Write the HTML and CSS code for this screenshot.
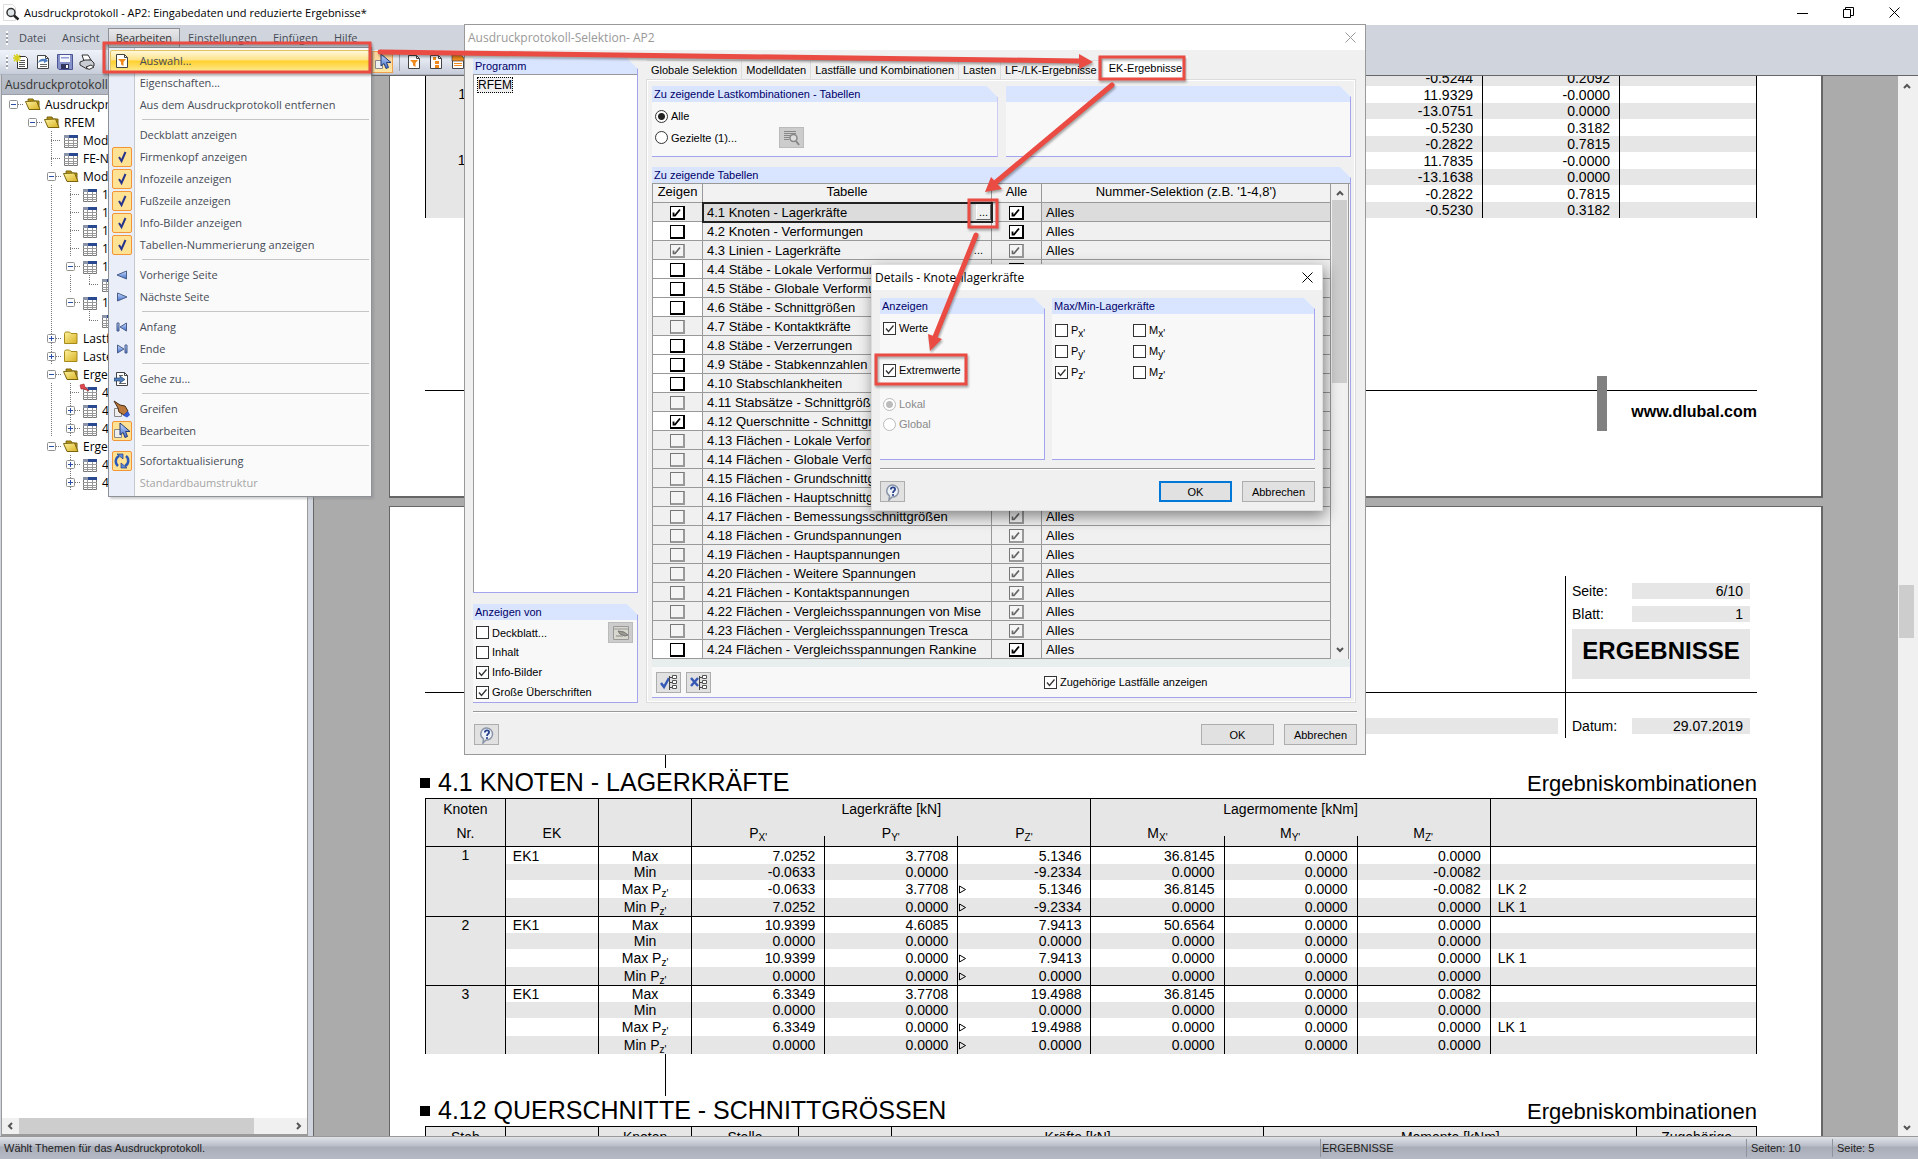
FILE: index.html
```html
<!DOCTYPE html>
<html lang="de">
<head>
<meta charset="utf-8">
<title>Ausdruckprotokoll - AP2</title>
<link rel="stylesheet" href="styles.css">
</head>
<body class="app">

<svg class="defs" aria-hidden="true">
  <defs>
    <linearGradient id="gold" x1="0" y1="0" x2="1" y2="1"><stop offset="0" stop-color="#fdf3a0"/><stop offset="1" stop-color="#d8b021"/></linearGradient>
    <linearGradient id="blue" x1="0" y1="0" x2="0" y2="1"><stop offset="0" stop-color="#c9dcff"/><stop offset="1" stop-color="#3f6cc8"/></linearGradient>
  </defs>
  <symbol id="t-v" viewBox="0 0 19 18"><path d="M9.500 0V18" class="dots"/></symbol>
  <symbol id="t-tee" viewBox="0 0 19 18"><path d="M9.500 0V18M9 9.500H21" class="dots"/></symbol>
  <symbol id="t-end" viewBox="0 0 19 18"><path d="M9.500 0V9M9 9.500H21" class="dots"/></symbol>
  <symbol id="t-minus" viewBox="0 0 19 18"><path d="M14 9.500H21" class="dots"/><rect x="5.500" y="5.500" width="8" height="8" rx="1" fill="#fff" stroke="#919191"/><path d="M7 9.500H12" stroke="#2b4fa8"/></symbol>
  <symbol id="t-plus" viewBox="0 0 19 18"><path d="M14 9.500H21M9.500 0V5M9.500 14V18" class="dots"/><rect x="5.500" y="5.500" width="8" height="8" rx="1" fill="#fff" stroke="#919191"/><path d="M7 9.500H12M9.500 7V12" stroke="#2b4fa8"/></symbol>
  <symbol id="f-open" viewBox="0 0 16 16"><path d="M3 3h5l1 2h5v7H4z" fill="#b8960f" stroke="#7a640e"/><path d="M.500 5.500 11.500 5 15 13.500H4z" fill="url(#gold)" stroke="#7a640e"/></symbol>
  <symbol id="f-shut" viewBox="0 0 16 16"><path d="M1.500 3.500 2.500 2h4l1.500 1.500h6v10h-12.500z" fill="url(#gold)" stroke="#a58a1c"/></symbol>
  <symbol id="sheet" viewBox="0 0 14 14"><path d="M.500 1.500h13v12H.500z" fill="#fff" stroke="#777"/><path d="M0 1h14v3H0z" fill="#8a93a8"/><path d="M5 1h9v3H5z" fill="#28488f"/><path d="M0 6.500h14M0 9.500h14M0 11.500h14M4.500 4v10M9.500 4v10" stroke="#999"/></symbol>
  <symbol id="page" viewBox="0 0 16 16"><path d="M2.500 1.500h8l3 3v10h-11z" fill="#fff" stroke="#444"/><path d="M10.500 1.500v3h3" fill="none" stroke="#444"/></symbol>
  <symbol id="funnel" viewBox="0 0 16 16"><use href="#page"/><path d="M4 6h8L9.500 9v4L7 11.500V9z" fill="#f08a1d"/></symbol>
  <symbol id="cursor" viewBox="0 0 18 18"><path d="M1.500 7.500h7v8h-7z" fill="#eee" stroke="#888"/><path d="M7 1v12l3-2.500 2 5 2.500-1-2-5H17z" fill="url(#blue)" stroke="#223a75"/></symbol>
  <symbol id="help" viewBox="0 0 18 18"><path d="M9 2a6 6 0 1 1-1 12l-3 3 .500-4A6 6 0 0 1 9 2z" fill="#eef2f8" stroke="#8b95a8" stroke-width="1.500"/><path d="M6.800 6.500C7 3.500 11.500 3.800 11 6.600 10.800 8 9 8 9 10" fill="none" stroke="#26408c" stroke-width="1.800"/><circle cx="9" cy="12" r="1.100" fill="#26408c"/></symbol>
  <symbol id="cross" viewBox="0 0 11 11"><path d="M.500.500l10 10M10.500.500l-10 10" stroke="currentColor" fill="none"/></symbol>
  <symbol id="up" viewBox="0 0 8 8"><path d="M1 6 4 3 7 6" fill="none" stroke="#555" stroke-width="2"/></symbol>
  <symbol id="down" viewBox="0 0 8 8"><path d="M1 2 4 5 7 2" fill="none" stroke="#555" stroke-width="2"/></symbol>
  <symbol id="left" viewBox="0 0 8 8"><path d="M6 1 3 4 6 7" fill="none" stroke="#555" stroke-width="2"/></symbol>
  <symbol id="right" viewBox="0 0 8 8"><path d="M2 1 5 4 2 7" fill="none" stroke="#555" stroke-width="2"/></symbol>
  <symbol id="tri" viewBox="0 0 8 9"><path d="M.500 1v7l6-3.500z" fill="none" stroke="#000"/></symbol>
</svg>

<header class="titlebar">
  <svg class="i18" viewBox="0 0 18 18"><path d="M1.500.500h9l3 3v13h-12z" fill="#fff" stroke="#ddd"/><circle cx="9" cy="8.500" r="4" fill="#dfe6ea" stroke="#333" stroke-width="1.500"/><path d="M12 11.500l4.500 4" stroke="#222" stroke-width="2.500"/></svg>
  <h1 class="title-text">Ausdruckprotokoll - AP2: Eingabedaten und reduzierte Ergebnisse*</h1>
  <div class="winctl">
    <button aria-label="Minimieren"><svg viewBox="0 0 11 11"><path d="M0 6.500h11" stroke="#000"/></svg></button>
    <button aria-label="Wiederherstellen"><svg viewBox="0 0 11 11"><path d="M.500 2.500h7v8h-7zM2.500 2.500v-2h8v8h-3" fill="none" stroke="#000"/></svg></button>
    <button aria-label="Schließen"><svg><use href="#cross"/></svg></button>
  </div>
</header>

<nav class="menubar">
  <span class="grip"></span>
  <button class="menu-btn">Datei</button>
  <button class="menu-btn">Ansicht</button>
  <div class="menu-host">
    <button class="menu-btn open">Bearbeiten</button>
    <ul class="menu">
      <li><button class="mi hot"><span class="ic"><svg class="i16"><use href="#funnel"/></svg></span>Auswahl...</button></li>
      <li><button class="mi"><span class="ic"></span>Eigenschaften...</button></li>
      <li><button class="mi"><span class="ic"></span>Aus dem Ausdruckprotokoll entfernen</button></li>
      <li class="msep"></li>
      <li><button class="mi"><span class="ic"></span>Deckblatt anzeigen</button></li>
      <li><button class="mi"><span class="ic on tick"></span>Firmenkopf anzeigen</button></li>
      <li><button class="mi"><span class="ic on tick"></span>Infozeile anzeigen</button></li>
      <li><button class="mi"><span class="ic on tick"></span>Fußzeile anzeigen</button></li>
      <li><button class="mi"><span class="ic on tick"></span>Info-Bilder anzeigen</button></li>
      <li><button class="mi"><span class="ic on tick"></span>Tabellen-Nummerierung anzeigen</button></li>
      <li class="msep"></li>
      <li><button class="mi"><span class="ic"><svg class="i12" viewBox="0 0 12 12"><path d="M1 6 10.500 2v8z" fill="url(#blue)" stroke="#4a5f8c"/></svg></span>Vorherige Seite</button></li>
      <li><button class="mi"><span class="ic"><svg class="i12" viewBox="0 0 12 12"><path d="M11 6 1.500 2v8z" fill="url(#blue)" stroke="#4a5f8c"/></svg></span>Nächste Seite</button></li>
      <li class="msep"></li>
      <li><button class="mi"><span class="ic"><svg class="i12" viewBox="0 0 12 12"><path d="M1 2h2v8H1zM4 6l6.500-4v8z" fill="url(#blue)" stroke="#4a5f8c"/></svg></span>Anfang</button></li>
      <li><button class="mi"><span class="ic"><svg class="i12" viewBox="0 0 12 12"><path d="M9 2h2v8H9zM8 6 1.500 2v8z" fill="url(#blue)" stroke="#4a5f8c"/></svg></span>Ende</button></li>
      <li class="msep"></li>
      <li><button class="mi"><span class="ic"><svg class="i16" viewBox="0 0 16 16"><use href="#page"/><path d="M5 12.500h7M5 4.500h4" stroke="#666"/><path d="M0 7h6V5l5 3.500L6 12v-2H0z" fill="#4f7fc0" stroke="#223a55" stroke-width=".600"/></svg></span>Gehe zu...</button></li>
      <li class="msep"></li>
      <li><button class="mi"><span class="ic"><svg class="i18" viewBox="0 0 18 18"><path d="M1.500 8.500h7v8h-7z" fill="#eee" stroke="#888"/><path d="M1 1l6 4 5 1 3 5-4 4-5-3-1-4z" fill="#b9793f" stroke="#4a2d12"/><path d="M15 11l2 4-3 2.500-4-2z" fill="#3459d0"/></svg></span>Greifen</button></li>
      <li><button class="mi"><span class="ic on"><svg class="i18"><use href="#cursor"/></svg></span>Bearbeiten</button></li>
      <li class="msep"></li>
      <li><button class="mi"><span class="ic on"><svg class="i16" viewBox="0 0 16 16"><path d="M4 13A6 6 0 0 1 5 3M12 3a6 6 0 0 1-1 10" fill="none" stroke="#2c59b8" stroke-width="2.500"/><path d="M3 1h6v5zM13 15H7v-5z" fill="#5d8be0" stroke="#223a75" stroke-width=".700"/></svg></span>Sofortaktualisierung</button></li>
      <li><button class="mi" disabled><span class="ic"></span>Standardbaumstruktur</button></li>
    </ul>
  </div>
  <button class="menu-btn">Einstellungen</button>
  <button class="menu-btn">Einfügen</button>
  <button class="menu-btn">Hilfe</button>
</nav>

<div class="toolbar">
  <span class="grip"></span>
  <button aria-label="Neu"><svg class="i16" viewBox="0 0 16 16"><path d="M4.500 2.500h8l2 2v10h-10z" fill="#fff" stroke="#333"/><path d="M6 6.500h6M6 8.500h6M6 10.500h6M6 12.500h6" stroke="#555"/><path d="M4 0v8M0 4h8M1 1l6 6M7 1 1 7" stroke="#d8cf1c" stroke-width="1.500"/></svg></button>
  <button aria-label="Öffnen"><svg class="i16" viewBox="0 0 16 16"><use href="#page"/><path d="M5 12.500h7M5 10.500h7" stroke="#666"/><path d="M3 9c1-4 4-5 7-4l0-1.500L13 7l-4 2V7.500C6 7 5 8 3 9z" fill="#4f7fc0"/></svg></button>
  <button aria-label="Speichern"><svg class="i16" viewBox="0 0 16 16"><path d="M.500.500h15v15H2l-1.500-1.500z" fill="#8792c9" stroke="#4b5596"/><path d="M3 1h10v7H3z" fill="#f4f6fb"/><path d="M4 3h8v1.500H4z" fill="#8c9bd8"/><path d="M4 10h8v5H4z" fill="#30365e"/><path d="M9 11h2v3H9z" fill="#fff"/></svg></button>
  <button aria-label="Drucken"><svg class="i16" viewBox="0 0 16 16"><path d="M3 1h6l3 5-7 1z" fill="#fff" stroke="#333"/><path d="M1 8l5-2h6l3 3v3l-7 3-7-4z" fill="#c9ccd2" stroke="#333"/><path d="M7 13l5-2 3 2-5 2.500z" fill="#fff" stroke="#333"/></svg></button>
  <span class="spacer"></span>
  <button class="active" aria-label="Bearbeiten"><svg class="i18"><use href="#cursor"/></svg></button>
  <span class="tsep"></span>
  <button aria-label="Auswahl"><svg class="i16"><use href="#funnel"/></svg></button>
  <button aria-label="Gliederung"><svg class="i16" viewBox="0 0 16 16"><use href="#page"/><path d="M5 3h3v3H5zM7 7h4v3H7zM7 11h4v3H7z" fill="#f08a1d"/></svg></button>
  <button aria-label="Kopfzeile"><svg class="i16" viewBox="0 0 16 16"><use href="#page"/><path d="M2 1h9l3 3v3H2z" fill="#f08a1d" stroke="#444" stroke-width=".700"/><path d="M4 9.500h8M4 11.500h8" stroke="#f08a1d"/></svg></button>
</div>

<main class="work">
  <aside class="side">
    <h2 class="side-head">Ausdruckprotokollnavigator</h2>
    <ul class="tree">
      <li><button class="x" aria-label="Zuklappen"><svg><use href="#t-minus"/></svg></button><svg class="i16"><use href="#f-open"/></svg><span>Ausdruckprotokoll</span></li>
      <li><svg></svg><button class="x" aria-label="Zuklappen"><svg><use href="#t-minus"/></svg></button><svg class="i16"><use href="#f-open"/></svg><span>RFEM</span></li>
      <li><svg></svg><svg></svg><svg><use href="#t-tee"/></svg><svg class="i14"><use href="#sheet"/></svg><span>Modell</span></li>
      <li><svg></svg><svg></svg><svg><use href="#t-tee"/></svg><svg class="i14"><use href="#sheet"/></svg><span>FE-Netz</span></li>
      <li><svg></svg><svg></svg><button class="x" aria-label="Zuklappen"><svg><use href="#t-minus"/></svg></button><svg class="i16"><use href="#f-open"/></svg><span>Modell</span></li>
      <li><svg></svg><svg></svg><svg><use href="#t-v"/></svg><svg><use href="#t-tee"/></svg><svg class="i14"><use href="#sheet"/></svg><span>1.1</span></li>
      <li><svg></svg><svg></svg><svg><use href="#t-v"/></svg><svg><use href="#t-tee"/></svg><svg class="i14"><use href="#sheet"/></svg><span>1.2</span></li>
      <li><svg></svg><svg></svg><svg><use href="#t-v"/></svg><svg><use href="#t-tee"/></svg><svg class="i14"><use href="#sheet"/></svg><span>1.3</span></li>
      <li><svg></svg><svg></svg><svg><use href="#t-v"/></svg><svg><use href="#t-tee"/></svg><svg class="i14"><use href="#sheet"/></svg><span>1.7</span></li>
      <li><svg></svg><svg></svg><svg><use href="#t-v"/></svg><button class="x" aria-label="Zuklappen"><svg><use href="#t-minus"/></svg></button><svg class="i14"><use href="#sheet"/></svg><span>1.13</span></li>
      <li><svg></svg><svg></svg><svg><use href="#t-v"/></svg><svg><use href="#t-v"/></svg><svg><use href="#t-end"/></svg><svg class="i14"><use href="#sheet"/></svg></li>
      <li><svg></svg><svg></svg><svg><use href="#t-v"/></svg><button class="x" aria-label="Zuklappen"><svg><use href="#t-minus"/></svg></button><svg class="i14"><use href="#sheet"/></svg><span>1.17</span></li>
      <li><svg></svg><svg></svg><svg><use href="#t-v"/></svg><svg></svg><svg><use href="#t-end"/></svg><svg class="i14"><use href="#sheet"/></svg></li>
      <li><svg></svg><svg></svg><button class="x" aria-label="Aufklappen"><svg><use href="#t-plus"/></svg></button><svg class="i16"><use href="#f-shut"/></svg><span>Lastfälle</span></li>
      <li><svg></svg><svg></svg><button class="x" aria-label="Aufklappen"><svg><use href="#t-plus"/></svg></button><svg class="i16"><use href="#f-shut"/></svg><span>Lasten</span></li>
      <li><svg></svg><svg></svg><button class="x" aria-label="Zuklappen"><svg><use href="#t-minus"/></svg></button><svg class="i16"><use href="#f-open"/></svg><span>Ergebnisse</span></li>
      <li><svg></svg><svg></svg><svg><use href="#t-v"/></svg><svg><use href="#t-tee"/></svg><svg class="i14 pinned" viewBox="0 0 14 14"><use href="#sheet"/><path d="M-3-1 1-2 2 1 6 5 1 3-2 3z" fill="#e0474c" stroke="#a02228" stroke-width=".600"/></svg><span>4.0</span></li>
      <li><svg></svg><svg></svg><svg><use href="#t-v"/></svg><button class="x" aria-label="Aufklappen"><svg><use href="#t-plus"/></svg></button><svg class="i14"><use href="#sheet"/></svg><span>4.1</span></li>
      <li><svg></svg><svg></svg><svg><use href="#t-v"/></svg><button class="x" aria-label="Aufklappen"><svg><use href="#t-plus"/></svg></button><svg class="i14"><use href="#sheet"/></svg><span>4.12</span></li>
      <li><svg></svg><svg></svg><button class="x" aria-label="Zuklappen"><svg><use href="#t-minus"/></svg></button><svg class="i16"><use href="#f-open"/></svg><span>Ergebnisse</span></li>
      <li><svg></svg><svg></svg><svg></svg><button class="x" aria-label="Aufklappen"><svg><use href="#t-plus"/></svg></button><svg class="i14"><use href="#sheet"/></svg><span>4.1</span></li>
      <li><svg></svg><svg></svg><svg></svg><button class="x" aria-label="Aufklappen"><svg><use href="#t-plus"/></svg></button><svg class="i14"><use href="#sheet"/></svg><span>4.12</span></li>
    </ul>
    <div class="hscroll"><svg><use href="#left"/></svg><span class="hthumb"></span><svg><use href="#right"/></svg></div>
  </aside>

  <div class="viewer">
    <article class="sheet first">
      <table class="report top-report">
        <colgroup><col class="w6"><col><col class="w137"><col class="w137"><col class="w137"></colgroup>
        <tbody>
          <tr><td class="no"></td><td></td><td class="n">-0.5244</td><td class="n">0.2092</td><td></td></tr>
          <tr><td class="no">11</td><td></td><td class="n">11.9329</td><td class="n">-0.0000</td><td></td></tr>
          <tr><td class="no"></td><td></td><td class="n">-13.0751</td><td class="n">0.0000</td><td></td></tr>
          <tr><td class="no"></td><td></td><td class="n">-0.5230</td><td class="n">0.3182</td><td></td></tr>
          <tr><td class="no"></td><td></td><td class="n">-0.2822</td><td class="n">0.7815</td><td></td></tr>
          <tr><td class="no">12</td><td></td><td class="n">11.7835</td><td class="n">-0.0000</td><td></td></tr>
          <tr><td class="no"></td><td></td><td class="n">-13.1638</td><td class="n">0.0000</td><td></td></tr>
          <tr><td class="no"></td><td></td><td class="n">-0.2822</td><td class="n">0.7815</td><td></td></tr>
          <tr><td class="no"></td><td></td><td class="n">-0.5230</td><td class="n">0.3182</td><td></td></tr>
        </tbody>
      </table>
      <footer class="sheet-foot"><span class="foot-bar"></span><b>www.dlubal.com</b></footer>
    </article>

    <article class="sheet second">
      <div class="letterhead">
        <div class="lh-left"></div>
        <div class="lh-right">
          <div class="lh-row"><span>Seite:</span><span class="field">6/10</span></div>
          <div class="lh-row"><span>Blatt:</span><span class="field">1</span></div>
          <div class="lh-title">ERGEBNISSE</div>
        </div>
      </div>
      <div class="letterhead sub">
        <div class="lh-left"><div class="lh-bar"></div></div>
        <div class="lh-right"><div class="lh-row"><span>Datum:</span><span class="field">29.07.2019</span></div></div>
      </div>
      <div class="stem short"></div>
      <div class="section-head"><span class="bullet"></span><h2>4.1 KNOTEN - LAGERKRÄFTE</h2><h3>Ergebniskombinationen</h3></div>
      <table class="report forces">
        <colgroup><col class="w6"><col class="w7"><col class="w7"><col class="w10"><col class="w10"><col class="w10"><col class="w10"><col class="w10"><col class="w10"><col class="w20"></colgroup>
        <thead>
          <tr><th>Knoten</th><th></th><th></th><th colspan="3">Lagerkräfte [kN]</th><th colspan="3">Lagermomente [kNm]</th><th></th></tr>
          <tr><th>Nr.</th><th>EK</th><th></th><th>P<sub>X'</sub></th><th class="tk">P<sub>Y'</sub></th><th class="tk">P<sub>Z'</sub></th><th>M<sub>X'</sub></th><th class="tk">M<sub>Y'</sub></th><th class="tk">M<sub>Z'</sub></th><th></th></tr>
        </thead>
        <tbody>
          <tr><td class="no" rowspan="4">1</td><td class="l">EK1</td><td class="m">Max</td><td class="n">7.0252</td><td class="n">3.7708</td><td class="n">5.1346</td><td class="n">36.8145</td><td class="n">0.0000</td><td class="n">0.0000</td><td></td></tr>
          <tr><td></td><td class="m">Min</td><td class="n">-0.0633</td><td class="n">0.0000</td><td class="n">-9.2334</td><td class="n">0.0000</td><td class="n">0.0000</td><td class="n">-0.0082</td><td></td></tr>
          <tr><td></td><td class="m">Max P<sub>z'</sub></td><td class="n">-0.0633</td><td class="n">3.7708</td><td class="n"><svg class="tri"><use href="#tri"/></svg>5.1346</td><td class="n">36.8145</td><td class="n">0.0000</td><td class="n">-0.0082</td><td class="l">LK 2</td></tr>
          <tr><td></td><td class="m">Min P<sub>z'</sub></td><td class="n">7.0252</td><td class="n">0.0000</td><td class="n"><svg class="tri"><use href="#tri"/></svg>-9.2334</td><td class="n">0.0000</td><td class="n">0.0000</td><td class="n">0.0000</td><td class="l">LK 1</td></tr>
        </tbody>
        <tbody>
          <tr><td class="no" rowspan="4">2</td><td class="l">EK1</td><td class="m">Max</td><td class="n">10.9399</td><td class="n">4.6085</td><td class="n">7.9413</td><td class="n">50.6564</td><td class="n">0.0000</td><td class="n">0.0000</td><td></td></tr>
          <tr><td></td><td class="m">Min</td><td class="n">0.0000</td><td class="n">0.0000</td><td class="n">0.0000</td><td class="n">0.0000</td><td class="n">0.0000</td><td class="n">0.0000</td><td></td></tr>
          <tr><td></td><td class="m">Max P<sub>z'</sub></td><td class="n">10.9399</td><td class="n">0.0000</td><td class="n"><svg class="tri"><use href="#tri"/></svg>7.9413</td><td class="n">0.0000</td><td class="n">0.0000</td><td class="n">0.0000</td><td class="l">LK 1</td></tr>
          <tr><td></td><td class="m">Min P<sub>z'</sub></td><td class="n">0.0000</td><td class="n">0.0000</td><td class="n"><svg class="tri"><use href="#tri"/></svg>0.0000</td><td class="n">0.0000</td><td class="n">0.0000</td><td class="n">0.0000</td><td></td></tr>
        </tbody>
        <tbody>
          <tr><td class="no" rowspan="4">3</td><td class="l">EK1</td><td class="m">Max</td><td class="n">6.3349</td><td class="n">3.7708</td><td class="n">19.4988</td><td class="n">36.8145</td><td class="n">0.0000</td><td class="n">0.0082</td><td></td></tr>
          <tr><td></td><td class="m">Min</td><td class="n">0.0000</td><td class="n">0.0000</td><td class="n">0.0000</td><td class="n">0.0000</td><td class="n">0.0000</td><td class="n">0.0000</td><td></td></tr>
          <tr><td></td><td class="m">Max P<sub>z'</sub></td><td class="n">6.3349</td><td class="n">0.0000</td><td class="n"><svg class="tri"><use href="#tri"/></svg>19.4988</td><td class="n">0.0000</td><td class="n">0.0000</td><td class="n">0.0000</td><td class="l">LK 1</td></tr>
          <tr><td></td><td class="m">Min P<sub>z'</sub></td><td class="n">0.0000</td><td class="n">0.0000</td><td class="n"><svg class="tri"><use href="#tri"/></svg>0.0000</td><td class="n">0.0000</td><td class="n">0.0000</td><td class="n">0.0000</td><td></td></tr>
        </tbody>
      </table>
      <div class="stem"></div>
      <div class="section-head"><span class="bullet"></span><h2>4.12 QUERSCHNITTE - SCHNITTGRÖSSEN</h2><h3>Ergebniskombinationen</h3></div>
      <table class="report">
        <colgroup><col class="w6"><col class="w7"><col class="w7"><col class="w8"><col class="w7"><col class="w28"><col class="w28"><col></colgroup>
        <thead><tr><th>Stab</th><th></th><th>Knoten</th><th>Stelle</th><th></th><th>Kräfte [kN]</th><th>Momente [kNm]</th><th>Zugehörige</th></tr></thead>
      </table>
    </article>
  </div>
  <div class="vscroll"><svg><use href="#up"/></svg><span class="vthumb"></span><svg><use href="#down"/></svg></div>
</main>

<footer class="status"><span class="grow">Wählt Themen für das Ausdruckprotokoll.</span><span class="s-mid">ERGEBNISSE</span><span class="s-end">Seiten: 10</span><span class="s-end">Seite: 5</span></footer>

<section class="dialog main-dialog" role="dialog" aria-label="Ausdruckprotokoll-Selektion">
  <header class="dlg-title inactive"><span>Ausdruckprotokoll-Selektion- AP2</span><button aria-label="Schließen"><svg><use href="#cross"/></svg></button></header>
  <div class="dlg-body">
    <div class="cols">
      <div class="col-left">
        <section class="group grow"><h3>Programm</h3><div class="listbox"><span class="picked">RFEM</span></div></section>
        <section class="group">
          <h3>Anzeigen von</h3>
          <div class="opts">
            <div class="opt-row"><label class="ck"><input type="checkbox">Deckblatt...</label>
              <button class="tool" disabled aria-label="Deckblatt bearbeiten"><svg class="i16" viewBox="0 0 16 16"><path d="M.500 1.500h15v13H.500z" fill="#d8d8cf" stroke="#999"/><path d="M1 4h14" stroke="#999"/><path d="M5 6l6 1 4 3-3 1-5-2z" fill="#9a9a92" stroke="#777"/><path d="M3 11h7" stroke="#888"/></svg></button></div>
            <label class="ck"><input type="checkbox">Inhalt</label>
            <label class="ck"><input type="checkbox" checked>Info-Bilder</label>
            <label class="ck"><input type="checkbox" checked>Große Überschriften</label>
          </div>
        </section>
      </div>
      <div class="col-right">
        <div class="tabs" role="tablist">
          <button role="tab">Globale Selektion</button><button role="tab">Modelldaten</button><button role="tab">Lastfälle und Kombinationen</button><button role="tab">Lasten</button><button role="tab">LF-/LK-Ergebnisse</button><button role="tab" class="sel" aria-selected="true">EK-Ergebnisse</button>
        </div>
        <div class="tab-panel">
          <div class="pair">
            <section class="group short"><h3>Zu zeigende Lastkombinationen - Tabellen</h3>
              <div class="opts radios">
                <label class="ck"><input type="radio" name="lk" checked>Alle</label>
                <div class="opt-row"><label class="ck"><input type="radio" name="lk">Gezielte (1)...</label>
                <button class="tool" disabled aria-label="Lastkombinationen wählen"><svg class="i16" viewBox="0 0 16 16"><path d="M0 1.500h12M0 3.500h12M0 5.500h7M0 7.500h6M0 9.500h5" stroke="#888"/><circle cx="9.500" cy="8" r="3.500" fill="#ddd" stroke="#888" stroke-width="1.500"/><path d="M12 11l3 4" stroke="#888" stroke-width="2"/></svg></button></div>
              </div></section>
            <section class="group short"><h3></h3></section>
          </div>
          <section class="group grow">
            <h3>Zu zeigende Tabellen</h3>
            <div class="grid-wrap">
              <table class="grid">
                <colgroup><col class="g1"><col class="g2"><col class="g3"><col></colgroup>
                <thead><tr><th>Zeigen</th><th>Tabelle</th><th>Alle</th><th>Nummer-Selektion (z.B. '1-4,8')</th></tr></thead>
                <tbody>
                  <tr class="cur"><td><input type="checkbox" checked aria-label="4.1 zeigen"></td><td class="focus">4.1 Knoten - Lagerkräfte<button class="dots-btn" aria-label="Details">...</button></td><td><input type="checkbox" checked aria-label="4.1 alle"></td><td>Alles</td></tr>
                  <tr><td class="w"><input type="checkbox" aria-label="4.2 zeigen"></td><td>4.2 Knoten - Verformungen</td><td><input type="checkbox" checked aria-label="4.2 alle"></td><td>Alles</td></tr>
                  <tr><td><input type="checkbox" checked disabled aria-label="4.3 zeigen"></td><td>4.3 Linien - Lagerkräfte<span class="more">...</span></td><td><input type="checkbox" checked disabled aria-label="4.3 alle"></td><td>Alles</td></tr>
                  <tr><td class="w"><input type="checkbox" aria-label="4.4 zeigen"></td><td>4.4 Stäbe - Lokale Verformungen</td><td><input type="checkbox" checked aria-label="4.4 alle"></td><td>Alles</td></tr>
                  <tr><td class="w"><input type="checkbox" aria-label="4.5 zeigen"></td><td>4.5 Stäbe - Globale Verformungen</td><td><input type="checkbox" checked aria-label="4.5 alle"></td><td>Alles</td></tr>
                  <tr><td class="w"><input type="checkbox" aria-label="4.6 zeigen"></td><td>4.6 Stäbe - Schnittgrößen</td><td><input type="checkbox" checked aria-label="4.6 alle"></td><td>Alles</td></tr>
                  <tr><td><input type="checkbox" disabled aria-label="4.7 zeigen"></td><td>4.7 Stäbe - Kontaktkräfte</td><td><input type="checkbox" checked disabled aria-label="4.7 alle"></td><td>Alles</td></tr>
                  <tr><td class="w"><input type="checkbox" aria-label="4.8 zeigen"></td><td>4.8 Stäbe - Verzerrungen</td><td><input type="checkbox" checked aria-label="4.8 alle"></td><td>Alles</td></tr>
                  <tr><td class="w"><input type="checkbox" aria-label="4.9 zeigen"></td><td>4.9 Stäbe - Stabkennzahlen</td><td><input type="checkbox" checked aria-label="4.9 alle"></td><td>Alles</td></tr>
                  <tr><td class="w"><input type="checkbox" aria-label="4.10 zeigen"></td><td>4.10 Stabschlankheiten</td><td><input type="checkbox" checked aria-label="4.10 alle"></td><td>Alles</td></tr>
                  <tr><td><input type="checkbox" disabled aria-label="4.11 zeigen"></td><td>4.11 Stabsätze - Schnittgrößen</td><td><input type="checkbox" checked disabled aria-label="4.11 alle"></td><td>Alles</td></tr>
                  <tr><td class="w"><input type="checkbox" checked aria-label="4.12 zeigen"></td><td>4.12 Querschnitte - Schnittgrößen</td><td><input type="checkbox" checked aria-label="4.12 alle"></td><td>Alles</td></tr>
                  <tr><td><input type="checkbox" disabled aria-label="4.13 zeigen"></td><td>4.13 Flächen - Lokale Verformungen</td><td><input type="checkbox" checked disabled aria-label="4.13 alle"></td><td>Alles</td></tr>
                  <tr><td><input type="checkbox" disabled aria-label="4.14 zeigen"></td><td>4.14 Flächen - Globale Verformungen</td><td><input type="checkbox" checked disabled aria-label="4.14 alle"></td><td>Alles</td></tr>
                  <tr><td><input type="checkbox" disabled aria-label="4.15 zeigen"></td><td>4.15 Flächen - Grundschnittgrößen</td><td><input type="checkbox" checked disabled aria-label="4.15 alle"></td><td>Alles</td></tr>
                  <tr><td><input type="checkbox" disabled aria-label="4.16 zeigen"></td><td>4.16 Flächen - Hauptschnittgrößen</td><td><input type="checkbox" checked disabled aria-label="4.16 alle"></td><td>Alles</td></tr>
                  <tr><td><input type="checkbox" disabled aria-label="4.17 zeigen"></td><td>4.17 Flächen - Bemessungsschnittgrößen</td><td><input type="checkbox" checked disabled aria-label="4.17 alle"></td><td>Alles</td></tr>
                  <tr><td><input type="checkbox" disabled aria-label="4.18 zeigen"></td><td>4.18 Flächen - Grundspannungen</td><td><input type="checkbox" checked disabled aria-label="4.18 alle"></td><td>Alles</td></tr>
                  <tr><td><input type="checkbox" disabled aria-label="4.19 zeigen"></td><td>4.19 Flächen - Hauptspannungen</td><td><input type="checkbox" checked disabled aria-label="4.19 alle"></td><td>Alles</td></tr>
                  <tr><td><input type="checkbox" disabled aria-label="4.20 zeigen"></td><td>4.20 Flächen - Weitere Spannungen</td><td><input type="checkbox" checked disabled aria-label="4.20 alle"></td><td>Alles</td></tr>
                  <tr><td><input type="checkbox" disabled aria-label="4.21 zeigen"></td><td>4.21 Flächen - Kontaktspannungen</td><td><input type="checkbox" checked disabled aria-label="4.21 alle"></td><td>Alles</td></tr>
                  <tr><td><input type="checkbox" disabled aria-label="4.22 zeigen"></td><td>4.22 Flächen - Vergleichsspannungen von Mise</td><td><input type="checkbox" checked disabled aria-label="4.22 alle"></td><td>Alles</td></tr>
                  <tr><td><input type="checkbox" disabled aria-label="4.23 zeigen"></td><td>4.23 Flächen - Vergleichsspannungen Tresca</td><td><input type="checkbox" checked disabled aria-label="4.23 alle"></td><td>Alles</td></tr>
                  <tr><td class="w"><input type="checkbox" aria-label="4.24 zeigen"></td><td>4.24 Flächen - Vergleichsspannungen Rankine</td><td><input type="checkbox" checked aria-label="4.24 alle"></td><td>Alles</td></tr>
                </tbody>
              </table>
              <div class="gscroll"><svg><use href="#up"/></svg><span class="gthumb"></span><svg><use href="#down"/></svg></div>
            </div>
            <div class="grid-foot">
              <button class="tool" aria-label="Alle wählen"><svg class="i18" viewBox="0 0 18 18"><path d="M1 9l3 4 5-9" fill="none" stroke="#3559b5" stroke-width="2.500"/><path d="M9.500 2v14M9 3.500h3M9 8.500h3M9 13.500h3" stroke="#444"/><path d="M12.500 1.500h4v3h-4zM12.500 6.500h4v3h-4zM12.500 11.500h4v3h-4z" fill="#fff" stroke="#555"/></svg></button>
              <button class="tool" aria-label="Alle abwählen"><svg class="i18" viewBox="0 0 18 18"><path d="M1 4l7 8M8 4l-7 8" fill="none" stroke="#3559b5" stroke-width="2.500"/><path d="M9.500 2v14M9 3.500h3M9 8.500h3M9 13.500h3" stroke="#444"/><path d="M12.500 1.500h4v3h-4zM12.500 6.500h4v3h-4zM12.500 11.500h4v3h-4z" fill="#fff" stroke="#555"/></svg></button>
              <label class="ck rel"><input type="checkbox" checked>Zugehörige Lastfälle anzeigen</label>
            </div>
          </section>
        </div>
      </div>
    </div>
    <div class="dlg-foot"><button class="tool" aria-label="Hilfe"><svg class="i18"><use href="#help"/></svg></button><span class="spring"></span><button class="btn">OK</button><button class="btn">Abbrechen</button></div>
  </div>
</section>

<section class="dialog detail-dialog" role="dialog" aria-label="Details">
  <header class="dlg-title"><span>Details - Knotenlagerkräfte</span><button aria-label="Schließen"><svg><use href="#cross"/></svg></button></header>
  <div class="dlg-body">
    <div class="pair uneven">
      <section class="group"><h3>Anzeigen</h3>
        <div class="opts spaced">
          <label class="ck"><input type="checkbox" checked>Werte</label>
          <label class="ck"><input type="checkbox" checked>Extremwerte</label>
          <div class="stack"><label class="ck off"><input type="radio" name="sys" checked disabled>Lokal</label>
          <label class="ck off"><input type="radio" name="sys" disabled>Global</label></div>
        </div></section>
      <section class="group"><h3>Max/Min-Lagerkräfte</h3>
        <div class="forces-opts">
          <label class="ck"><input type="checkbox"><span>P<sub>x'</sub></span></label><label class="ck"><input type="checkbox"><span>M<sub>x'</sub></span></label>
          <label class="ck"><input type="checkbox"><span>P<sub>y'</sub></span></label><label class="ck"><input type="checkbox"><span>M<sub>y'</sub></span></label>
          <label class="ck"><input type="checkbox" checked><span>P<sub>z'</sub></span></label><label class="ck"><input type="checkbox"><span>M<sub>z'</sub></span></label>
        </div></section>
    </div>
    <div class="dlg-foot"><button class="tool" aria-label="Hilfe"><svg class="i18"><use href="#help"/></svg></button><span class="spring"></span><button class="btn default">OK</button><button class="btn">Abbrechen</button></div>
  </div>
</section>

<svg class="marks" aria-hidden="true">
  <g fill="none" stroke="#ea4b43" stroke-width="3">
    <rect x="104" y="43" width="266" height="29"/>
    <rect x="1100" y="57" width="84" height="22"/>
    <rect x="969" y="200" width="28" height="27"/>
    <rect x="876" y="355" width="90" height="29"/>
  </g>
  <g fill="none" stroke="#ea4b43" stroke-width="5" stroke-linecap="round">
    <path d="M380 52 1079 61"/><path d="M1112 85 996 182"/><path d="M976 235 935 337"/>
  </g>
  <g fill="#ea4b43"><path d="M1079 54 1093 62 1079 69z"/><path d="M985 192 991 177 1002 189z"/><path d="M930 351 928 334 942 339z"/></g>
</svg>
</body>
</html>
```
FILE: styles.css
```css
* { box-sizing: border-box; }
html, body { height: 100%; }
body, h1, h2, h3, ul { margin: 0; padding: 0; font-weight: normal; }
ul { list-style: none; }
button { font: inherit; color: inherit; border: 0; background: none; padding: 0; margin: 0; }
svg { display: block; flex: none; }
table { border-spacing: 0; table-layout: fixed; width: 100%; }
th, td { padding: 0; font-weight: normal; }

.app { display: flex; flex-direction: column; overflow: hidden; position: relative; background: #d0d4dd; font: 11px "Liberation Sans", Arial, sans-serif; color: #000; }
.defs { position: absolute; width: 0; height: 0; }
.dots { stroke: #777; stroke-dasharray: 1 1; fill: none; }
.i12 { width: 12px; height: 12px; }
.i14 { width: 14px; height: 14px; }
.i16 { width: 16px; height: 16px; }
.i18 { width: 18px; height: 18px; }
.spring, .grow { flex: 1; }

/* window chrome */
.titlebar { flex: none; height: 25px; display: flex; align-items: center; gap: 4px; padding-left: 2px; background: #fff; }
.title-text { font: 11px "Open Sans", sans-serif; flex: 1; }
.winctl { display: flex; padding-right: 18px; gap: 35px; }
.winctl svg { width: 11px; height: 11px; }
.menubar { flex: none; height: 25px; display: flex; align-items: center; padding-left: 4px; font: 11px "Open Sans", sans-serif; color: #474c57; }
.grip { width: 5px; height: 14px; margin-right: 2px; background: repeating-linear-gradient(#fff 0 2px, #9aa0ad 2px 4px) 2px 0 / 2px 100% no-repeat; }
.menu-btn { height: 20px; padding: 0 8px; line-height: 18px; }
.menu-host { position: relative; }
.menu-btn.open { background: linear-gradient(#e8e8ea, #c9cacd); border: 1px solid #8f9198; border-bottom: 0; padding: 0 7px; color: #333; }
.menu { position: absolute; left: 0; top: 19px; width: 264px; padding: 2px 1px; z-index: 5; border: 1px solid #8f9198; background: linear-gradient(90deg, #e9eef8 25px, #c5c8cf 25px 26px, #fafafa 26px); box-shadow: 2px 2px 2px #8886; }
.mi { width: 100%; height: 22px; display: flex; align-items: center; gap: 8px; text-align: left; padding-left: 2px; }
.mi:disabled { color: #a5a5a5; }
.mi.hot { border: 1px solid #e5c365; border-radius: 2px; padding-left: 1px; background: linear-gradient(#fff8d8, #ffe389 45%, #ffd02c 50%, #ffe98f); }
.ic { width: 20px; height: 20px; display: grid; place-items: center; }
.ic.on { border: 1px solid #f29536; border-radius: 2px; background-color: #ffe294; }
.ic.tick { background-image: url("data:image/svg+xml,%3Csvg xmlns='http://www.w3.org/2000/svg' width='18' height='18'%3E%3Cpath d='M6 9l2.500 4 4-9' fill='none' stroke='%2326348c' stroke-width='2'/%3E%3C/svg%3E"); }
.msep { height: 8px; padding: 3px 1px 0 32px; }
.msep::before { content: ""; display: block; height: 1px; background: #c5c5c5; }
.toolbar { flex: none; height: 25px; display: flex; align-items: center; gap: 6px; padding-left: 4px; width: 60%; background: linear-gradient(#eef2f9, #dfe4ee 50%, #c6ccd9); border-bottom: 1px solid #aeb4c0; }
.toolbar .grip { margin-right: -2px; }
.spacer { width: 265px; }
.toolbar .active { width: 21px; height: 22px; display: grid; place-items: center; border: 1px solid #f0a04b; background: linear-gradient(#fcd09a, #ffe7a4); }
.tsep { width: 1px; height: 18px; background: #9aa0ad; }

/* working area */
.work { flex: 1; min-height: 0; display: flex; padding-left: 1px; }
.side { width: 307px; flex: none; margin-right: 5px; display: flex; flex-direction: column; background: #fff; border: solid #9a9a9a; border-width: 0 1px 2px; overflow: hidden; }
.side-head { flex: none; height: 20px; padding-left: 3px; font: 12px/19px "Open Sans", sans-serif; color: #333; background: linear-gradient(#bac0ca, #b3b9c4); border-bottom: 1px solid #9a9fa9; }
.tree { flex: 1; padding-left: 2px; font: 12px "Open Sans", sans-serif; }
.tree li { height: 18px; display: flex; align-items: center; white-space: nowrap; }
.tree li > svg:not(.i16, .i14), .tree .x svg { width: 19px; height: 18px; overflow: visible; }
.tree .i16 { margin: 0 4px 0 2px; }
.tree .i14 { margin: 2px 5px 0 3px; }
.tree .pinned { overflow: visible; }
.hscroll { height: 16px; display: flex; align-items: center; background: #f0f0f0; padding: 0 4px; }
.hscroll svg, .vscroll svg, .gscroll svg { width: 8px; height: 8px; }
.hthumb { width: 79%; height: 100%; margin: 0 auto 0 5px; background: #cdcdcd; }
.viewer { flex: 1; min-width: 0; overflow: hidden; padding: 0 75px; background: #ababab; border: solid #666; border-width: 1px 0 0 1px; }
.vscroll { width: 20px; flex: none; display: flex; flex-direction: column; align-items: center; background: #f0f0f0; padding: 6px 3px 4px 0; border-top: 1px solid #666; }
.vthumb { width: 15px; height: 53px; margin: 495px 0 auto; background: #cdcdcd; }
.status { flex: none; height: 23px; display: flex; align-items: center; padding-top: 1px; color: #222; background: linear-gradient(#999 1px, #dfe2e8 1px, #b9bdc8 10px, #a9adb8 11px, #b4b8c4 22px); }
.status span { padding-left: 4px; line-height: 18px; }
.status .s-mid { width: 426px; border-left: 1px solid #8f939c; padding-left: 1px; }
.s-end { width: 86px; border-left: 1px solid #8f939c; }

/* report pages */
.sheet { background: #fff; border: solid #666; border-width: 1px 2px 2px 1px; padding: 0 64px 0 35px; font: 14px/16px "Liberation Sans", Arial, sans-serif; }
.sheet.first { margin-top: -7px; margin-bottom: 8px; }
.report { border-right: 1px solid #000; white-space: nowrap; }
.w6 { width: 6%; } .w7 { width: 7%; } .w8 { width: 8%; } .w10 { width: 10%; } .w20 { width: 20%; } .w28 { width: 28%; } .w137 { width: 137px; }
.report td, .report th { border-left: 1px solid #000; height: 16px; }
.report thead { background: #e6e6e6; }
.report th { height: 24px; vertical-align: top; padding-top: 2px; }
.report thead tr:first-child th { border-top: 1px solid #000; }
.report td.n { text-align: right; padding-right: 9px; }
.report td.l { padding-left: 7px; }
.report td.m { text-align: center; }
.report td.no { text-align: center; vertical-align: top; background: #e6e6e6; }
.report sub, .forces-opts sub { font-size: 10px; line-height: 0; vertical-align: -3px; }
.top-report tr:nth-child(odd) { background: #e6e6e6; }
.top-report tr:nth-child(even) td { height: 17px; }
.forces thead tr:first-child th { height: 25px; }
.forces thead tr + tr th { border-bottom: 1px solid #000; }
.forces .tk { border-left: 0; background: linear-gradient(#000, #000) 0 100% / 1px 10px no-repeat; }
.forces tbody tr:nth-child(even) { background: #e6e6e6; }
.forces tbody tr:nth-child(1) td { height: 17px; }
.forces tbody tr:nth-child(n+3) td { height: 18px; }
.forces tbody + tbody tr:first-child td { border-top: 1px solid #000; }
.tri { float: left; width: 8px; height: 9px; margin: 4px 0 0 1px; }
.sheet-foot { position: relative; height: 106px; margin-top: 172px; padding-top: 12px; border-top: 1px solid #000; text-align: right; font-size: 16px; line-height: 18px; }
.foot-bar { position: absolute; right: 150px; top: -15px; width: 10px; height: 55px; background: #808080; }
.sheet.second { padding-top: 69px; }
.letterhead { display: flex; }
.letterhead.sub { border-top: 1px solid #000; height: 46px; }
.lh-left { flex: 1; }
.lh-right { width: 192px; border-left: 1px solid #000; padding: 7px 7px 13px 6px; display: flex; flex-direction: column; gap: 7px; }
.sub .lh-right { padding-top: 25px; padding-bottom: 4px; }
.lh-row { display: flex; justify-content: space-between; }
.field { width: 118px; background: #e6e6e6; text-align: right; padding-right: 7px; }
.lh-title { height: 50px; background: #e6e6e6; text-align: center; font: bold 24px/44px "Liberation Sans", Arial, sans-serif; }
.lh-bar { height: 16px; margin: 25px 7px 0 30%; background: #e6e6e6; }
.stem { height: 42px; margin-left: 18%; border-left: 1px solid #000; }
.stem.short { height: 30px; }
.section-head { display: flex; align-items: baseline; margin-left: -5px; line-height: 28px; }
.bullet { width: 10px; height: 10px; background: #000; margin-right: 8px; align-self: center; }
.section-head h2 { flex: 1; font-size: 25px; }
.section-head h3 { font-size: 22px; }

/* dialogs */
.dialog { position: absolute; z-index: 10; display: flex; flex-direction: column; background: #f0f0f0; border: 1px solid #999; }
.main-dialog { left: 464px; top: 24px; width: 902px; height: 731px; }
.detail-dialog { left: 871px; top: 264px; width: 452px; height: 247px; z-index: 11; border-color: #ddd; box-shadow: 2px 5px 14px #0007; }
.dlg-title { flex: none; height: 25px; display: flex; align-items: center; justify-content: space-between; padding: 0 9px 0 3px; background: #fff; font: 12px "Open Sans", sans-serif; }
.dlg-title.inactive { color: #999; }
.dlg-title svg { width: 11px; height: 11px; }
.dlg-body { flex: 1; min-height: 0; display: flex; flex-direction: column; padding: 8px; }
.cols { flex: 1; min-height: 0; display: flex; gap: 8px; }
.col-left { width: 165px; display: flex; flex-direction: column; gap: 11px; }
.col-right { flex: 1; display: flex; flex-direction: column; padding: 2px 1px 0 0; }
.group { display: flex; flex-direction: column; min-height: 0; background: #f8f8f8; border: solid #a4a4ee; border-width: 0 1px 1px 0; clip-path: polygon(0 0, calc(100% - 11px) 0, 100% 11px, 100% 100%, 0 100%); }
.group h3 { flex: none; height: 16px; padding-left: 2px; line-height: 16px; background: #d9e5ff; color: #000068; font-size: 11px; }
.listbox { flex: 1; padding: 2px 3px; background: #fff; border: solid #999; border-width: 1px 0 0 1px; font-size: 12px; }
.picked { display: inline-block; border: 1px dotted #000; background: #f0f0f0; line-height: 14px; }
.opts { display: flex; flex-direction: column; gap: 4px; padding: 2px 4px 2px 3px; }
.opt-row { display: flex; justify-content: space-between; align-items: center; margin-bottom: -3px; }
.ck { display: flex; align-items: center; gap: 3px; height: 16px; white-space: nowrap; }
.ck.off { color: #8a8a8a; }
input[type="checkbox"], input[type="radio"] { appearance: none; flex: none; margin: 0; width: 13px; height: 13px; border: 1px solid #333; background: #fff; }
input[type="radio"] { border-radius: 50%; }
input[type="radio"]:checked { background: radial-gradient(circle, #222 3px, #fff 4px); }
input[type="radio"]:disabled { border-color: #bbb; }
input[type="radio"]:checked:disabled { background: radial-gradient(circle, #bbb 3px, #fff 4px); }
input[type="checkbox"]:checked { background: #fff url("data:image/svg+xml,%3Csvg xmlns='http://www.w3.org/2000/svg' width='11' height='11'%3E%3Cpath d='M2 5.500l2.500 3 5-6' fill='none' stroke='%23333' stroke-width='1.300'/%3E%3C/svg%3E"); }
.tool { width: 25px; height: 21px; display: grid; place-items: center; background: #e1e1e1; border: 1px solid #adadad; }
.tool:disabled { background: #ccc; border-color: #bbb; }
.tabs { display: flex; height: 19px; margin-left: 1px; }
.tabs button { flex: none; padding: 0 4px 0 4px; border: solid #dcdcdc; border-width: 1px 1px 0 0; white-space: nowrap; }
.tabs .sel { position: relative; padding: 0 6px; background: #fff; margin: -4px 0 0 1px; height: 23px; border: 0; }
.tab-panel { flex: 1; min-height: 0; display: flex; flex-direction: column; gap: 10px; padding: 6px 4px 4px 5px; border: 1px solid #dcdcdc; box-shadow: inset -1px -1px #fff, inset 1px 1px #fff; }
.pair { display: grid; grid-template-columns: 1fr 1fr; gap: 8px; }
.group.short { height: 71px; }
.radios { padding-top: 6px; gap: 3px; }
.radios .opt-row { justify-content: flex-start; gap: 42px; margin: 0; }
.grid-wrap { display: flex; border-top: 1px solid #999; }
.grid { flex: 1; font-size: 13px; border-left: 1px solid #999; white-space: nowrap; }
.g1 { width: 50px; } .g2 { width: 289px; } .g3 { width: 50px; }
.grid th { height: 19px; line-height: 16px; padding-bottom: 2px; border: solid #999; border-width: 0 1px 1px 0; background: #f2f2f2; }
.grid td { height: 19px; line-height: 17px; border: solid #999; border-width: 0 1px 1px 0; padding-left: 4px; background: #f0f0f0; overflow: hidden; }
.grid td:nth-child(odd) { padding: 0; text-align: center; }
.grid td.w { background: #fff; }
.grid .cur td { background: #dcdcdc; }
.grid .cur td:nth-child(odd) { background: #ececec; }
.grid .cur td.focus { outline: 2px solid #222; outline-offset: -1px; }
.grid input { display: inline-block; width: 15px; height: 14px; vertical-align: -3px; border: 2px solid #000; border-width: 1px 2px 2px 1px; background-color: #fff; }
.grid input:disabled { border-color: #777 #999 #999 #777; background-color: #f4f4f4; }
.grid input[type="checkbox"]:checked { background-image: url("data:image/svg+xml,%3Csvg xmlns='http://www.w3.org/2000/svg' width='12' height='11'%3E%3Cpath d='M2.500 5.500v3h1.500l5-6' fill='none' stroke='%23000' stroke-width='1.800'/%3E%3C/svg%3E"); }
.grid input[type="checkbox"]:checked:disabled { background-image: url("data:image/svg+xml,%3Csvg xmlns='http://www.w3.org/2000/svg' width='12' height='11'%3E%3Cpath d='M2.500 5.500v3h1.500l5-6' fill='none' stroke='%23666' stroke-width='1.700'/%3E%3C/svg%3E"); }
.dots-btn { float: right; width: 15px; height: 16px; line-height: 12px; font-size: 11px; background: #f0f0f0; border: 1px solid; border-color: #fff #666 #666 #fff; }
.more { float: right; padding-right: 8px; font-size: 11px; }
.gscroll { width: 18px; display: flex; flex-direction: column; align-items: center; background: #f0f0f0; padding: 5px 1px; margin-right: 1px; border-right: 1px solid #999; }
.gthumb { width: 15px; height: 183px; margin: 3px 0 auto; background: #cdcdcd; }
.grid-foot { flex: 1; display: flex; align-items: flex-start; gap: 5px; padding: 5px 4px 0; border-top: 8px solid #e8eeee; }
.grid-foot .rel { margin: 2px auto 0 328px; }
.dlg-foot { flex: none; display: flex; align-items: center; gap: 10px; margin-top: 8px; padding-top: 12px; border-top: 1px solid #999; box-shadow: inset 0 1px #fff; }
.main-dialog .dlg-foot { padding: 12px 0 1px 1px; }
.btn { width: 73px; height: 21px; background: #e1e1e1; border: 1px solid #adadad; }
.btn.default { border: 2px solid #0078d7; }
.pair.uneven { flex: 1; grid-template-columns: 165px 1fr; gap: 7px; }
.spaced { gap: 26px; padding-top: 6px; }
.stack { display: flex; flex-direction: column; gap: 4px; margin-top: -8px; }
.forces-opts { display: grid; grid-template-columns: 78px 1fr; gap: 5px 0; padding: 8px 3px; align-content: start; }
.detail-dialog .dlg-body { padding-right: 7px; }
.detail-dialog .dlg-foot { padding-bottom: 0; }
.marks { position: absolute; left: 0; top: 0; width: 1400px; height: 400px; z-index: 20; pointer-events: none; filter: drop-shadow(1px 2px 1px #0005); }
```
